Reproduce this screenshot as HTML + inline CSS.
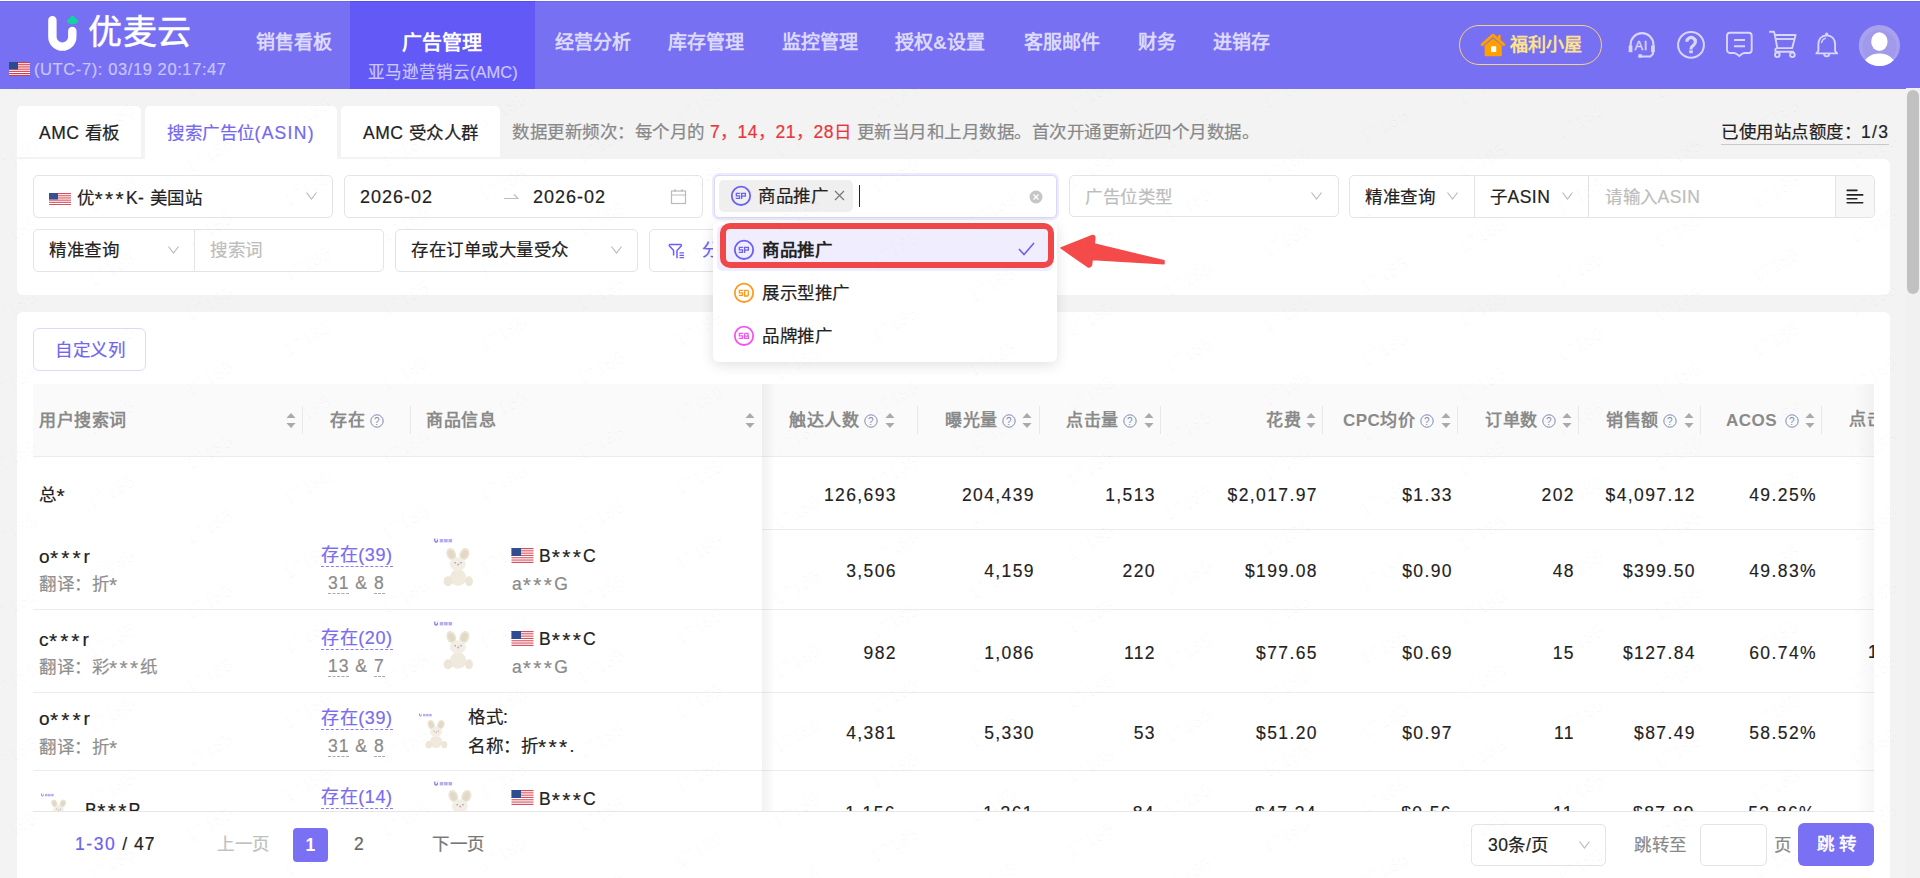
<!DOCTYPE html>
<html lang="zh-CN"><head><meta charset="utf-8">
<style>
*{box-sizing:border-box;margin:0;padding:0}
html,body{width:1920px;height:878px;overflow:hidden}
body{position:relative;background:#f3f3f3;font-family:"Liberation Sans",sans-serif;color:#222;font-size:17.5px;-webkit-text-stroke-width:.2px;text-spacing-trim:space-all;letter-spacing:.5px}
.a{position:absolute;white-space:nowrap}
#hdr{position:absolute;left:0;top:0;width:1920px;height:89px;background:#7770f3;border-top:1px solid #fff}
#hdr:before{content:"";position:absolute;left:0;top:0;z-index:0;width:100%;height:1px;background:#6b64ee}
.nav{position:absolute;top:29px;font-size:19px;letter-spacing:0;font-weight:bold;-webkit-text-stroke-width:0;color:#dcd9ff;line-height:26px}
.panel{position:absolute;background:#fff;border-radius:6px}
.box{position:absolute;border:1px solid #e3e3ea;border-radius:5px;background:#fff}
.chev{position:absolute;width:11px;height:8px}
.ph{color:#bdbdbd}
.th{position:absolute;top:408px;font-size:17px;font-weight:bold;-webkit-text-stroke-width:0;color:#8a8a8a;line-height:26px}
.q{position:absolute;top:414px;width:14px;height:14px}
.srt{position:absolute;top:413px;width:10px;height:15px}
.dv{position:absolute;top:406px;width:1px;height:28px;background:#e8e8e8}
.num{position:absolute;font-size:17.5px;letter-spacing:1.4px;color:#222;line-height:20px;text-align:right;-webkit-text-stroke:.15px #222;margin-top:1px}
.v{letter-spacing:1.3px}
.ast{font-size:21px;letter-spacing:2.3px;position:relative;top:2px}
.hl{position:absolute;height:1px;background:#ececec}
</style></head><body>
<!-- HEADER -->
<div id="hdr">
  <div class="a" style="left:350px;top:0;width:185px;height:88px;background:#6359f6"></div>
  <div class="a" style="left:350px;top:0;width:185px;height:1px;background:#5549f5"></div>
  <svg class="a" style="left:44px;top:12px" width="40" height="42" viewBox="0 0 40 42">
    <path d="M8.4 7.2 V23.7 a9.95 9.95 0 0 0 19.9 0 V17.9" fill="none" stroke="#fff" stroke-width="8.4" stroke-linecap="round"/>
    <ellipse cx="28.6" cy="8" rx="5.6" ry="3.3" fill="#13d3a0"/><circle cx="28.6" cy="5.6" r="2.6" fill="#13d3a0"/>
  </svg>
  <div class="a" style="left:88px;top:11px;font-size:34px;color:#fff;line-height:40px;-webkit-text-stroke:.5px #fff">优麦云</div>
  <svg class="a" style="left:9px;top:61px" width="21" height="14" viewBox="0 0 21 14">
    <rect width="21" height="14" fill="#fff"/>
    <g fill="#d23c4b"><rect y="0" width="21" height="1.2"/><rect y="2.2" width="21" height="1.1"/><rect y="4.4" width="21" height="1.1"/><rect y="6.6" width="21" height="1.1"/><rect y="8.8" width="21" height="1.1"/><rect y="11" width="21" height="1.1"/><rect y="12.9" width="21" height="1.1"/></g>
    <rect width="9" height="7.5" fill="#2c4a8c"/>
  </svg>
  <div class="a" style="left:34px;top:59px;font-size:16.5px;letter-spacing:.6px;color:#c9c5ff;line-height:20px;top:58px">(UTC-7): 03/19 20:17:47</div>
  <div class="nav" style="left:256px">销售看板</div>
  <div class="nav" style="left:402px;top:29px;font-size:20px;color:#fff">广告管理</div>
  <div class="a" style="left:368px;top:61px;font-size:16.5px;letter-spacing:0;color:#cbc7ff;line-height:20px">亚马逊营销云(AMC)</div>
  <div class="nav" style="left:555px">经营分析</div>
  <div class="nav" style="left:668px">库存管理</div>
  <div class="nav" style="left:782px">监控管理</div>
  <div class="nav" style="left:895px">授权&amp;设置</div>
  <div class="nav" style="left:1024px">客服邮件</div>
  <div class="nav" style="left:1138px">财务</div>
  <div class="nav" style="left:1213px">进销存</div>
  <!-- welfare pill -->
  <div class="a" style="left:1459px;top:24px;width:143px;height:40px;border:1.3px solid #f6d27c;border-radius:20px"></div>
  <svg class="a" style="left:1480px;top:32px" width="26" height="24" viewBox="0 0 26 24">
    <path d="M2.2 11.6 L13 2.2 L23.8 11.6" fill="none" stroke="#ffa000" stroke-width="3" stroke-linecap="round" stroke-linejoin="round"/>
    <rect x="18" y="2" width="2.6" height="5.5" fill="#ffa000"/>
    <path d="M4.6 12.6 L13 5.6 L21.8 12.6 V22 a1.2 1.2 0 0 1 -1.2 1.2 H5.8 a1.2 1.2 0 0 1 -1.2 -1.2Z" fill="#ffa000"/>
    <rect x="11" y="13.2" width="5.2" height="5.8" rx=".6" fill="#fff"/>
  </svg>
  <div class="a" style="left:1510px;top:31px;font-size:18px;font-weight:bold;-webkit-text-stroke-width:0;letter-spacing:0;color:#ffe38c;line-height:26px">福利小屋</div>
  <!-- icons -->
  <svg class="a" style="left:1626px;top:29px" width="32" height="30" viewBox="0 0 32 30">
    <path d="M4.6 16 V14.5 a11.4 11.4 0 0 1 22.8 0 V16" fill="none" stroke="#d9d6ff" stroke-width="2.1"/>
    <rect x="2.7" y="15.6" width="3.7" height="6.6" fill="#d9d6ff"/>
    <rect x="25.1" y="15.6" width="3.7" height="6.6" fill="#d9d6ff"/>
    <path d="M27 22 V23.8 L24.3 26.6 H12.6" fill="none" stroke="#d9d6ff" stroke-width="2"/>
    <rect x="12.4" y="24.2" width="3.4" height="3.4" fill="#d9d6ff"/>
    <text x="15.2" y="19.5" text-anchor="middle" font-family="Liberation Sans" font-size="13" fill="#d9d6ff" stroke="#d9d6ff" stroke-width=".4">AI</text>
  </svg>
  <svg class="a" style="left:1676px;top:29px" width="30" height="30" viewBox="0 0 30 30">
    <circle cx="15" cy="14.9" r="12.9" fill="none" stroke="#d9d6ff" stroke-width="2"/>
    <path d="M10.8 11.8 a4.3 4.3 0 1 1 6.6 3.6 c-1.6 1 -2.4 1.6 -2.4 3.4 v.6" fill="none" stroke="#d9d6ff" stroke-width="3.2"/>
    <rect x="13.2" y="20.4" width="3.6" height="2.8" fill="#d9d6ff"/>
  </svg>
  <svg class="a" style="left:1725px;top:30px" width="30" height="28" viewBox="0 0 30 28">
    <path d="M5 1.8 H23.7 a3 3 0 0 1 3 3 V19 a3 3 0 0 1 -3 3 H19.5 Q18 22 16.5 23.3 L14.3 25 L12 23.3 Q10.5 22 9 22 H5 a3 3 0 0 1 -3 -3 V4.8 a3 3 0 0 1 3 -3Z" fill="none" stroke="#d9d6ff" stroke-width="1.9"/>
    <path d="M9 9 H20 M9 15.3 H20" stroke="#d9d6ff" stroke-width="1.9"/>
  </svg>
  <svg class="a" style="left:1768px;top:29px" width="30" height="30" viewBox="0 0 30 30">
    <path d="M1.1 1.8 H6 L6.9 5" fill="none" stroke="#d9d6ff" stroke-width="1.9" stroke-linejoin="round"/>
    <path d="M6.9 5 H27.6 L24.2 18.1 H9.3 Z" fill="none" stroke="#d9d6ff" stroke-width="1.9" stroke-linejoin="round"/>
    <path d="M7.9 9 H26.6" stroke="#d9d6ff" stroke-width="1.9"/>
    <path d="M9.3 18.1 Q7.3 18.1 7.3 19.9 Q7.3 21.7 9.3 21.7 H26" fill="none" stroke="#d9d6ff" stroke-width="1.9"/>
    <circle cx="9.3" cy="24.8" r="2.3" fill="none" stroke="#d9d6ff" stroke-width="1.9"/>
    <circle cx="24.4" cy="24.8" r="2.3" fill="none" stroke="#d9d6ff" stroke-width="1.9"/>
  </svg>
  <svg class="a" style="left:1814px;top:29px" width="26" height="30" viewBox="0 0 26 30">
    <path d="M12.7 5.3 C7.2 5.6 4.4 9.5 4.4 14.5 V21 L2.4 23.4 H23.1 L21.1 21 V14.5 C21.1 9.5 18.2 5.6 12.7 5.3Z" fill="none" stroke="#d9d6ff" stroke-width="1.9" stroke-linejoin="round"/>
    <circle cx="12.7" cy="4" r="1.6" fill="#d9d6ff"/>
    <path d="M10.1 23.8 a2.6 2.6 0 0 0 5.2 0" fill="none" stroke="#d9d6ff" stroke-width="1.8"/>
    <path d="M7.4 13 Q8.2 9.2 11.8 7.9" fill="none" stroke="#d9d6ff" stroke-width="1.3"/>
  </svg>
  <svg class="a" style="left:1858px;top:22px" width="44" height="44" viewBox="0 0 44 44">
    <defs><clipPath id="avc"><circle cx="21.4" cy="22.5" r="20.6"/></clipPath></defs>
    <circle cx="21.4" cy="22.5" r="20.6" fill="#a7a1ee"/>
    <circle cx="21.4" cy="24" r="17" fill="#9c94e6" opacity=".6"/>
    <g clip-path="url(#avc)">
      <ellipse cx="21.4" cy="18.7" rx="8.2" ry="9.4" fill="#fff"/>
      <ellipse cx="21.4" cy="46.2" rx="17.5" ry="15.8" fill="#fff"/>
    </g>
  </svg>
</div>
<!-- TABS -->
<div class="panel" style="left:17px;top:106px;width:124px;height:51px;border-radius:5px 5px 0 0"></div>
<div class="panel" style="left:145px;top:106px;width:192px;height:60px;border-radius:5px 5px 0 0"></div>
<div class="panel" style="left:341px;top:106px;width:159px;height:51px;border-radius:5px 5px 0 0"></div>
<div class="a" style="left:39px;top:121px;font-size:17.5px;color:#222;line-height:24px">AMC 看板</div>
<div class="a" style="left:167px;top:121px;font-size:17.5px;color:#7468ef;line-height:24px">搜索广告位<span class="v">(ASIN)</span></div>
<div class="a" style="left:363px;top:121px;font-size:17.5px;color:#222;line-height:24px">AMC 受众人群</div>
<div class="a" style="left:512px;top:120px;font-size:17.5px;color:#888;line-height:24px">数据更新频次：每个月的 <span style="color:#e8363b">7，14，21，28日</span> 更新当月和上月数据。首次开通更新近四个月数据。</div>
<div class="a" style="left:1721px;top:120px;font-size:17.5px;color:#222;line-height:24px;height:25px;border-bottom:1px solid #c8c8c8">已使用站点额度：<span class="v">1/3</span></div>
<!-- FILTER PANEL -->
<div class="panel" style="left:17px;top:159px;width:1873px;height:136px;border-radius:0 6px 6px 6px"></div>
<!-- row1 -->
<div class="box" style="left:33px;top:175px;width:300px;height:43px"></div>
<svg class="a" style="left:49px;top:193px" width="22" height="12" viewBox="0 0 22 12">
  <rect width="22" height="12" fill="#fff"/>
  <g fill="#d8505c"><rect y="0" width="22" height="1"/><rect y="1.9" width="22" height="0.9"/><rect y="3.7" width="22" height="0.9"/><rect y="5.5" width="22" height="0.9"/><rect y="7.3" width="22" height="0.9"/><rect y="9.1" width="22" height="0.9"/><rect y="11" width="22" height="1"/></g>
  <rect width="9" height="6.5" fill="#3a4f8f"/>
</svg>
<div class="a" style="left:77px;top:185px;font-size:17.5px;line-height:24px">优<span class="ast">***</span>K- 美国站</div>
<svg class="chev" style="left:306px;top:192px" viewBox="0 0 11 8"><path d="M.5 .5 L5.5 7 L10.5 .5" fill="none" stroke="#bbb" stroke-width="1.2"/></svg>
<div class="box" style="left:344px;top:175px;width:359px;height:43px"></div>
<div class="a" style="left:360px;top:185px;font-size:18px;letter-spacing:1px;line-height:24px">2026-02</div>
<svg class="a" style="left:504px;top:193px" width="15" height="6" viewBox="0 0 15 6"><path d="M0 5.5 H14 L10 1.5" fill="none" stroke="#bbb" stroke-width="1.2"/></svg>
<div class="a" style="left:533px;top:185px;font-size:18px;letter-spacing:1px;line-height:24px">2026-02</div>
<svg class="a" style="left:670px;top:188px" width="17" height="17" viewBox="0 0 17 17"><rect x="1.5" y="3" width="14" height="12.5" fill="none" stroke="#bbb" stroke-width="1.2"/><path d="M1.5 7 H15.5 M5 1 V4 M12 1 V4" stroke="#bbb" stroke-width="1.2"/></svg>
<!-- tag select focused -->
<div class="a" style="left:712px;top:173px;width:347px;height:47px;border-radius:7px;background:#edeafd"></div>
<div class="box" style="left:714px;top:175px;width:343px;height:43px;border-color:#dcd8f8"></div>
<div class="a" style="left:719px;top:180px;width:134px;height:32px;background:#efefef;border-radius:5px"></div>
<svg class="a" style="left:730px;top:185px" width="22" height="22" viewBox="0 0 22 22"><circle cx="11" cy="10.8" r="9.2" fill="none" stroke="#6c5ff5" stroke-width="1.8"/><path d="M10.2 8.45 H6.35 V10.9 H9.55 V13.35 H5.7 M11.65 14 V8.45 H15.35 V11.2 H11.65" fill="none" stroke="#6c5ff5" stroke-width="1.3"/></svg>
<div class="a" style="left:758px;top:184px;font-size:17.5px;line-height:24px">商品推广</div>
<svg class="a" style="left:834px;top:190px" width="11" height="11" viewBox="0 0 11 11"><path d="M1 1 L10 10 M10 1 L1 10" stroke="#777" stroke-width="1.2"/></svg>
<div class="a" style="left:859px;top:185px;width:1px;height:22px;background:#222"></div>
<svg class="a" style="left:1029px;top:190px" width="14" height="14" viewBox="0 0 14 14"><circle cx="7" cy="7" r="6.5" fill="#c6c6c6"/><path d="M4.5 4.5 L9.5 9.5 M9.5 4.5 L4.5 9.5" stroke="#fff" stroke-width="1.3"/></svg>
<div class="box" style="left:1069px;top:175px;width:270px;height:42px"></div>
<div class="a ph" style="left:1085px;top:185px;font-size:17.5px;line-height:24px">广告位类型</div>
<svg class="chev" style="left:1311px;top:192px" viewBox="0 0 11 8"><path d="M.5 .5 L5.5 7 L10.5 .5" fill="none" stroke="#bbb" stroke-width="1.2"/></svg>
<div class="box" style="left:1349px;top:175px;width:526px;height:43px"></div>
<div class="a" style="left:1474px;top:176px;width:1px;height:42px;background:#e3e3ea"></div>
<div class="a" style="left:1588px;top:176px;width:1px;height:42px;background:#e3e3ea"></div>
<div class="a" style="left:1835px;top:176px;width:39px;height:41px;background:#f7f7f7;border-left:1px solid #e3e3ea;border-radius:0 5px 5px 0"></div>
<div class="a" style="left:1365px;top:185px;font-size:17.5px;line-height:24px">精准查询</div>
<svg class="chev" style="left:1447px;top:192px" viewBox="0 0 11 8"><path d="M.5 .5 L5.5 7 L10.5 .5" fill="none" stroke="#bbb" stroke-width="1.2"/></svg>
<div class="a" style="left:1490px;top:185px;font-size:17.5px;line-height:24px">子ASIN</div>
<svg class="chev" style="left:1562px;top:192px" viewBox="0 0 11 8"><path d="M.5 .5 L5.5 7 L10.5 .5" fill="none" stroke="#bbb" stroke-width="1.2"/></svg>
<div class="a ph" style="left:1605px;top:185px;font-size:17.5px;line-height:24px">请输入ASIN</div>
<svg class="a" style="left:1846px;top:188px" width="18" height="17" viewBox="0 0 18 17"><path d="M1.2 2.4 H10.9 M1.2 6.9 H16.7 M1.2 10.8 H10.9 M1.2 14.8 H16.7" stroke="#222" stroke-width="1.6" stroke-linecap="round"/></svg>
<!-- row2 -->
<div class="box" style="left:33px;top:229px;width:351px;height:43px"></div>
<div class="a" style="left:194px;top:230px;width:1px;height:41px;background:#e3e3ea"></div>
<div class="a" style="left:49px;top:238px;font-size:17.5px;line-height:24px">精准查询</div>
<svg class="chev" style="left:168px;top:246px" viewBox="0 0 11 8"><path d="M.5 .5 L5.5 7 L10.5 .5" fill="none" stroke="#bbb" stroke-width="1.2"/></svg>
<div class="a ph" style="left:210px;top:238px;font-size:17.5px;line-height:24px">搜索词</div>
<div class="box" style="left:395px;top:229px;width:243px;height:43px"></div>
<div class="a" style="left:411px;top:238px;font-size:17.5px;line-height:24px">存在订单或大量受众</div>
<svg class="chev" style="left:611px;top:246px" viewBox="0 0 11 8"><path d="M.5 .5 L5.5 7 L10.5 .5" fill="none" stroke="#bbb" stroke-width="1.2"/></svg>
<div class="box" style="left:649px;top:229px;width:120px;height:43px"></div>
<svg class="a" style="left:668px;top:243px" width="18" height="17" viewBox="0 0 18 17"><path d="M5.6 12.6 V7.5 L1.5 3 Q.8 1.7 2.2 1.6 H12.5 Q13.9 1.7 13.2 3 L9 7.5 V15.2" fill="none" stroke="#6c5ff5" stroke-width="1.5" stroke-linejoin="round"/><path d="M11.5 9.9 H16 M11.5 12.3 H16 M11.5 14.7 H16" stroke="#6c5ff5" stroke-width="1.2"/></svg>
<div class="a" style="left:702px;top:238px;font-size:17.5px;line-height:24px;color:#6c5ff5">分</div>
<!-- TABLE PANEL -->
<div class="panel" style="left:17px;top:312px;width:1873px;height:600px"></div>
<div class="a" style="left:33px;top:328px;width:113px;height:43px;border:1px solid #dedaf3;border-radius:6px;background:#fff"></div>
<div class="a" style="left:55px;top:338px;font-size:17.5px;color:#7265f0;line-height:24px">自定义列</div>
<!-- table header -->
<div class="a" style="left:33px;top:384px;width:1841px;height:72px;background:#fafafa"></div>
<div class="hl" style="left:33px;top:456px;width:1841px"></div>
<div class="th" style="left:39px">用户搜索词</div>
<svg class="srt" style="left:286px" viewBox="0 0 10 15"><path d="M5 0 L9.6 5 H.4Z M5 15 L9.6 10 H.4Z" fill="#aaa"/></svg>
<div class="dv" style="left:302px"></div>
<div class="th" style="left:330px">存在</div>
<svg class="q" style="left:370px" viewBox="0 0 14 14"><circle cx="7" cy="7" r="6.2" fill="none" stroke="#7d89b3" stroke-width="1"/><text x="7" y="10.5" text-anchor="middle" font-family="Liberation Sans" font-size="10" fill="#7d89b3">?</text></svg>
<div class="dv" style="left:410px"></div>
<div class="th" style="left:426px">商品信息</div>
<svg class="srt" style="left:745px" viewBox="0 0 10 15"><path d="M5 0 L9.6 5 H.4Z M5 15 L9.6 10 H.4Z" fill="#aaa"/></svg>
<!-- scroll section headers -->
<div class="th" style="left:789px">触达人数</div>
<svg class="q" style="left:864px" viewBox="0 0 14 14"><circle cx="7" cy="7" r="6.2" fill="none" stroke="#7d89b3" stroke-width="1"/><text x="7" y="10.5" text-anchor="middle" font-family="Liberation Sans" font-size="10" fill="#7d89b3">?</text></svg>
<svg class="srt" style="left:885px" viewBox="0 0 10 15"><path d="M5 0 L9.6 5 H.4Z M5 15 L9.6 10 H.4Z" fill="#aaa"/></svg>
<div class="dv" style="left:917px"></div>
<div class="th" style="left:945px">曝光量</div>
<svg class="q" style="left:1002px" viewBox="0 0 14 14"><circle cx="7" cy="7" r="6.2" fill="none" stroke="#7d89b3" stroke-width="1"/><text x="7" y="10.5" text-anchor="middle" font-family="Liberation Sans" font-size="10" fill="#7d89b3">?</text></svg>
<svg class="srt" style="left:1022px" viewBox="0 0 10 15"><path d="M5 0 L9.6 5 H.4Z M5 15 L9.6 10 H.4Z" fill="#aaa"/></svg>
<div class="dv" style="left:1039px"></div>
<div class="th" style="left:1066px">点击量</div>
<svg class="q" style="left:1123px" viewBox="0 0 14 14"><circle cx="7" cy="7" r="6.2" fill="none" stroke="#7d89b3" stroke-width="1"/><text x="7" y="10.5" text-anchor="middle" font-family="Liberation Sans" font-size="10" fill="#7d89b3">?</text></svg>
<svg class="srt" style="left:1144px" viewBox="0 0 10 15"><path d="M5 0 L9.6 5 H.4Z M5 15 L9.6 10 H.4Z" fill="#aaa"/></svg>
<div class="dv" style="left:1160px"></div>
<div class="th" style="left:1266px">花费</div>
<svg class="srt" style="left:1306px" viewBox="0 0 10 15"><path d="M5 0 L9.6 5 H.4Z M5 15 L9.6 10 H.4Z" fill="#aaa"/></svg>
<div class="dv" style="left:1322px"></div>
<div class="th" style="left:1343px">CPC均价</div>
<svg class="q" style="left:1420px" viewBox="0 0 14 14"><circle cx="7" cy="7" r="6.2" fill="none" stroke="#7d89b3" stroke-width="1"/><text x="7" y="10.5" text-anchor="middle" font-family="Liberation Sans" font-size="10" fill="#7d89b3">?</text></svg>
<svg class="srt" style="left:1441px" viewBox="0 0 10 15"><path d="M5 0 L9.6 5 H.4Z M5 15 L9.6 10 H.4Z" fill="#aaa"/></svg>
<div class="dv" style="left:1457px"></div>
<div class="th" style="left:1485px">订单数</div>
<svg class="q" style="left:1542px" viewBox="0 0 14 14"><circle cx="7" cy="7" r="6.2" fill="none" stroke="#7d89b3" stroke-width="1"/><text x="7" y="10.5" text-anchor="middle" font-family="Liberation Sans" font-size="10" fill="#7d89b3">?</text></svg>
<svg class="srt" style="left:1562px" viewBox="0 0 10 15"><path d="M5 0 L9.6 5 H.4Z M5 15 L9.6 10 H.4Z" fill="#aaa"/></svg>
<div class="dv" style="left:1578px"></div>
<div class="th" style="left:1606px">销售额</div>
<svg class="q" style="left:1663px" viewBox="0 0 14 14"><circle cx="7" cy="7" r="6.2" fill="none" stroke="#7d89b3" stroke-width="1"/><text x="7" y="10.5" text-anchor="middle" font-family="Liberation Sans" font-size="10" fill="#7d89b3">?</text></svg>
<svg class="srt" style="left:1684px" viewBox="0 0 10 15"><path d="M5 0 L9.6 5 H.4Z M5 15 L9.6 10 H.4Z" fill="#aaa"/></svg>
<div class="dv" style="left:1700px"></div>
<div class="th" style="left:1726px">ACOS</div>
<svg class="q" style="left:1785px" viewBox="0 0 14 14"><circle cx="7" cy="7" r="6.2" fill="none" stroke="#7d89b3" stroke-width="1"/><text x="7" y="10.5" text-anchor="middle" font-family="Liberation Sans" font-size="10" fill="#7d89b3">?</text></svg>
<svg class="srt" style="left:1805px" viewBox="0 0 10 15"><path d="M5 0 L9.6 5 H.4Z M5 15 L9.6 10 H.4Z" fill="#aaa"/></svg>
<div class="dv" style="left:1821px"></div>
<div class="a" style="left:1849px;top:384px;width:25px;height:72px;overflow:hidden"><div class="th" style="left:0;top:23px">点击</div></div>
<!-- ROWS -->
<div class="hl" style="left:762px;top:529px;width:1112px"></div>
<div class="hl" style="left:33px;top:609px;width:1841px"></div>
<div class="hl" style="left:33px;top:692px;width:1841px"></div>
<div class="hl" style="left:33px;top:770px;width:1841px"></div>
<div class="a" style="left:33px;top:811px;width:1841px;height:1px;background:#e6e6e6"></div>
<div class="a" style="left:762px;top:384px;width:14px;height:427px;background:linear-gradient(to right,rgba(0,0,0,.05),rgba(0,0,0,0))"></div>
<div class="a" style="left:1856px;top:384px;width:18px;height:427px;background:linear-gradient(to right,rgba(0,0,0,0),rgba(0,0,0,.035))"></div>
<!-- summary -->
<div class="a" style="left:39px;top:482px;font-size:17.5px;line-height:24px">总<span class="ast">*</span></div>
<div class="num" style="right:1023px;top:484px">126,693</div>
<div class="num" style="right:885px;top:484px">204,439</div>
<div class="num" style="right:764px;top:484px">1,513</div>
<div class="num" style="right:602px;top:484px">$2,017.97</div>
<div class="num" style="right:467px;top:484px">$1.33</div>
<div class="num" style="right:345px;top:484px">202</div>
<div class="num" style="right:224px;top:484px">$4,097.12</div>
<div class="num" style="right:103px;top:484px">49.25%</div>
<!-- row1 -->
<div class="a" style="left:39px;top:544px;font-size:17.5px;line-height:24px;letter-spacing:.5px"><span style="font-size:19px">o</span><span class="ast" style="letter-spacing:3px">***</span><span style="font-size:19px">r</span></div>
<div class="a" style="left:39px;top:571px;font-size:17.5px;line-height:24px;color:#8f8f8f">翻译：折<span class="ast">*</span></div>
<div class="num" style="right:1023px;top:560px">3,506</div>
<div class="num" style="right:885px;top:560px">4,159</div>
<div class="num" style="right:764px;top:560px">220</div>
<div class="num" style="right:602px;top:560px">$199.08</div>
<div class="num" style="right:467px;top:560px">$0.90</div>
<div class="num" style="right:345px;top:560px">48</div>
<div class="num" style="right:224px;top:560px">$399.50</div>
<div class="num" style="right:103px;top:560px">49.83%</div>
<!-- row2 -->
<div class="a" style="left:39px;top:627px;font-size:17.5px;line-height:24px;letter-spacing:.5px"><span style="font-size:19px">c</span><span class="ast" style="letter-spacing:3px">***</span><span style="font-size:19px">r</span></div>
<div class="a" style="left:39px;top:654px;font-size:17.5px;line-height:24px;color:#8f8f8f">翻译：彩<span class="ast">***</span>纸</div>
<div class="num" style="right:1023px;top:642px">982</div>
<div class="num" style="right:885px;top:642px">1,086</div>
<div class="num" style="right:764px;top:642px">112</div>
<div class="num" style="right:602px;top:642px">$77.65</div>
<div class="num" style="right:467px;top:642px">$0.69</div>
<div class="num" style="right:345px;top:642px">15</div>
<div class="num" style="right:224px;top:642px">$127.84</div>
<div class="num" style="right:103px;top:642px">60.74%</div>
<div class="a" style="left:1868px;top:642px;width:6px;overflow:hidden;font-size:17.5px;line-height:20px">1</div>
<!-- row3 -->
<div class="a" style="left:39px;top:706px;font-size:17.5px;line-height:24px;letter-spacing:.5px"><span style="font-size:19px">o</span><span class="ast" style="letter-spacing:3px">***</span><span style="font-size:19px">r</span></div>
<div class="a" style="left:39px;top:734px;font-size:17.5px;line-height:24px;color:#8f8f8f">翻译：折<span class="ast">*</span></div>
<div class="num" style="right:1023px;top:722px">4,381</div>
<div class="num" style="right:885px;top:722px">5,330</div>
<div class="num" style="right:764px;top:722px">53</div>
<div class="num" style="right:602px;top:722px">$51.20</div>
<div class="num" style="right:467px;top:722px">$0.97</div>
<div class="num" style="right:345px;top:722px">11</div>
<div class="num" style="right:224px;top:722px">$87.49</div>
<div class="num" style="right:103px;top:722px">58.52%</div>
<!-- row4 clipped -->
<div class="a" style="left:0;top:771px;width:1874px;height:40px;overflow:hidden">
  <div class="num" style="right:978px;top:31px">1,156</div>
  <div class="num" style="right:840px;top:31px">1,361</div>
  <div class="num" style="right:719px;top:31px">84</div>
  <div class="num" style="right:557px;top:31px">$47.34</div>
  <div class="num" style="right:422px;top:31px">$0.56</div>
  <div class="num" style="right:300px;top:31px">11</div>
  <div class="num" style="right:179px;top:31px">$87.89</div>
  <div class="num" style="right:58px;top:31px">53.86%</div>
  <div class="a" style="left:85px;top:26px;font-size:17.5px;line-height:24px;letter-spacing:.5px">B<span class="ast">***</span>P</div>
</div>
<svg width="0" height="0" style="position:absolute">
  <defs>
    <symbol id="bun" viewBox="0 0 31 39">
      <ellipse cx="8.3" cy="6.2" rx="4.6" ry="6.3" transform="rotate(-22 8.3 6.2)" fill="#ebe3d3"/>
      <ellipse cx="21.4" cy="6.2" rx="4.8" ry="6.3" transform="rotate(22 21.4 6.2)" fill="#ebe3d3"/>
      <ellipse cx="8.5" cy="6.6" rx="2.8" ry="4.6" transform="rotate(-22 8.5 6.6)" fill="#e2d8c5"/>
      <ellipse cx="21.2" cy="6.6" rx="2.9" ry="4.6" transform="rotate(22 21.2 6.6)" fill="#e2d8c5"/>
      <ellipse cx="15" cy="29.5" rx="8.2" ry="8.3" fill="#efe9de"/>
      <ellipse cx="14.8" cy="16" rx="8" ry="6.8" fill="#f3eee5"/>
      <ellipse cx="5" cy="33.2" rx="4.4" ry="5" fill="#ece5d8"/>
      <ellipse cx="26" cy="33.2" rx="3.9" ry="5" fill="#ece5d8"/>
      <circle cx="12.2" cy="14.8" r=".8" fill="#8d9aa8"/><circle cx="18" cy="14.8" r=".8" fill="#8d9aa8"/>
      <circle cx="15.2" cy="16.6" r="1" fill="#e79aa2"/>
    </symbol>
    <symbol id="flag" viewBox="0 0 22 15">
      <rect width="22" height="15" fill="#fff"/>
      <g fill="#d8505c"><rect y="0" width="22" height="1.2"/><rect y="2.3" width="22" height="1.1"/><rect y="4.6" width="22" height="1.1"/><rect y="6.9" width="22" height="1.1"/><rect y="9.2" width="22" height="1.1"/><rect y="11.5" width="22" height="1.1"/><rect y="13.8" width="22" height="1.2"/></g>
      <rect width="9.5" height="8" fill="#2f4d8f"/>
    </symbol>
    <symbol id="lg" viewBox="0 0 20 5">
      <path d="M.8 .4 V2.8 a1.3 1.3 0 0 0 2.6 0 V2" fill="none" stroke="#7465f2" stroke-width="1.1"/>
      <circle cx="3.4" cy="1" r=".6" fill="#2dcf9a"/>
      <rect x="5.7" y="1" width="3.6" height="3.4" fill="#b3abf6"/><rect x="10.1" y="1" width="3.6" height="3.4" fill="#b3abf6"/><rect x="14.5" y="1" width="3.6" height="3.4" fill="#b3abf6"/>
    </symbol>
  </defs>
</svg>
<style>
.lnk{position:absolute;left:321px;font-size:18px;letter-spacing:.6px;color:#7a6cf0;line-height:22px;border-bottom:1.5px dashed #8a7ef2;padding-bottom:0}
.cnt{position:absolute;left:328px;font-size:17.5px;color:#8a8a8a;line-height:22px;letter-spacing:1px}
.cnt u{text-decoration:none;border-bottom:1px dashed #aaa}
.bn{position:absolute;width:31px;height:39px}
.lgo{position:absolute;width:20px;height:5px}
.fl{position:absolute;width:23px;height:15px}
.asin{position:absolute;left:539px;font-size:17.5px;line-height:22px;letter-spacing:1px}
.sku{position:absolute;left:512px;font-size:17.5px;line-height:22px;letter-spacing:1px;color:#8a8a8a}
</style>
<!-- row1 product -->
<div class="lnk" style="top:544px">存在(39)</div>
<div class="cnt" style="top:572px"><u>31</u> &amp; <u>8</u></div>
<svg class="lgo" style="left:434px;top:538px"><use href="#lg"/></svg>
<svg class="bn" style="left:443px;top:548px"><use href="#bun"/></svg>
<svg class="fl" style="left:511px;top:548px"><use href="#flag"/></svg>
<div class="asin" style="top:544px">B<span class="ast">***</span>C</div>
<div class="sku" style="top:572px">a<span class="ast">***</span>G</div>
<!-- row2 product -->
<div class="lnk" style="top:627px">存在(20)</div>
<div class="cnt" style="top:655px"><u>13</u> &amp; <u>7</u></div>
<svg class="lgo" style="left:434px;top:621px"><use href="#lg"/></svg>
<svg class="bn" style="left:443px;top:631px"><use href="#bun"/></svg>
<svg class="fl" style="left:511px;top:631px"><use href="#flag"/></svg>
<div class="asin" style="top:627px">B<span class="ast">***</span>C</div>
<div class="sku" style="top:655px">a<span class="ast">***</span>G</div>
<!-- row3 product -->
<div class="lnk" style="top:707px">存在(39)</div>
<div class="cnt" style="top:735px"><u>31</u> &amp; <u>8</u></div>
<svg class="lgo" style="left:419px;top:713px;width:14px;height:4px"><use href="#lg"/></svg>
<svg class="bn" style="left:425px;top:720px;width:23px;height:29px"><use href="#bun"/></svg>
<div class="a" style="left:468px;top:705px;font-size:17.5px;line-height:24px">格式:</div>
<div class="a" style="left:468px;top:733px;font-size:17.5px;line-height:24px;letter-spacing:.5px">名称：折<span class="ast">***</span>.</div>
<!-- row4 product clipped -->
<div class="a" style="left:0;top:771px;width:1874px;height:40px;overflow:hidden">
  <div class="lnk" style="top:15px">存在(14)</div>
  <svg class="lgo" style="left:434px;top:10px"><use href="#lg"/></svg>
  <svg class="bn" style="left:445px;top:19px"><use href="#bun"/></svg>
  <svg class="fl" style="left:511px;top:19px"><use href="#flag"/></svg>
  <div class="asin" style="top:16px">B<span class="ast">***</span>C</div>
  <svg class="lgo" style="left:41px;top:22px;width:14px;height:4px"><use href="#lg"/></svg>
  <svg class="bn" style="left:49px;top:28px;width:20px;height:26px"><use href="#bun"/></svg>
</div>
<!-- PAGINATION -->
<div class="a" style="left:75px;top:832px;font-size:17.5px;line-height:24px;letter-spacing:1px"><span style="color:#6d5fef;letter-spacing:1.6px">1-30</span> / 47</div>
<div class="a" style="left:217px;top:832px;font-size:17.5px;line-height:24px;color:#c0c0c0">上一页</div>
<div class="a" style="left:293px;top:828px;width:35px;height:34px;background:#7a70f3;border-radius:4px;color:#fff;font-weight:bold;-webkit-text-stroke-width:0;font-size:17.5px;line-height:34px;text-align:center">1</div>
<div class="a" style="left:354px;top:832px;font-size:17.5px;line-height:24px;color:#666">2</div>
<div class="a" style="left:432px;top:832px;font-size:17.5px;line-height:24px;color:#777">下一页</div>
<div class="box" style="left:1471px;top:824px;width:135px;height:42px"></div>
<div class="a" style="left:1488px;top:833px;font-size:17.5px;line-height:24px">30条/页</div>
<svg class="chev" style="left:1579px;top:841px" viewBox="0 0 11 8"><path d="M.5 .5 L5.5 7 L10.5 .5" fill="none" stroke="#bbb" stroke-width="1.2"/></svg>
<div class="a" style="left:1634px;top:833px;font-size:17.5px;line-height:24px;color:#888">跳转至</div>
<div class="box" style="left:1700px;top:824px;width:67px;height:42px"></div>
<div class="a" style="left:1774px;top:833px;font-size:17.5px;line-height:24px;color:#888">页</div>
<div class="a" style="left:1798px;top:823px;width:76px;height:43px;background:#7a70f3;border-radius:6px;color:#fff;-webkit-text-stroke-width:.5px;font-size:17.5px;line-height:43px;text-align:center;letter-spacing:5px;padding-left:5px">跳转</div>
<!-- DROPDOWN -->
<div class="a" style="left:713px;top:222px;width:344px;height:140px;background:#fff;border-radius:6px;box-shadow:0 3px 14px rgba(0,0,0,.12)"></div>
<div class="a" style="left:717px;top:225px;width:336px;height:46px;background:#f0eefe;border-radius:6px"></div>
<div class="a" style="left:720px;top:223px;width:334px;height:45px;border:6px solid #f04848;border-radius:10px"></div>
<svg class="a" style="left:733px;top:239px" width="22" height="22" viewBox="0 0 22 22"><circle cx="11" cy="10.8" r="9.2" fill="none" stroke="#6c5ff5" stroke-width="1.8"/><path d="M10.2 8.45 H6.35 V10.9 H9.55 V13.35 H5.7 M11.65 14 V8.45 H15.35 V11.2 H11.65" fill="none" stroke="#6c5ff5" stroke-width="1.3"/></svg>
<div class="a" style="left:762px;top:238px;font-size:17.5px;font-weight:bold;-webkit-text-stroke-width:0;line-height:24px">商品推广</div>
<svg class="a" style="left:1018px;top:242px" width="17" height="14" viewBox="0 0 17 14"><path d="M1 7 L6 12.5 L16 1" fill="none" stroke="#6c5ff5" stroke-width="1.6"/></svg>
<svg class="a" style="left:733px;top:282px" width="22" height="22" viewBox="0 0 22 22"><circle cx="11" cy="10.8" r="9.2" fill="none" stroke="#ff9a1c" stroke-width="1.8"/><path d="M10.2 8.45 H6.35 V10.9 H9.55 V13.35 H5.7 M11.65 8.45 H14.4 Q15.35 8.45 15.35 9.4 V13.05 Q15.35 14 14.4 14 H11.65Z" fill="none" stroke="#ff9a1c" stroke-width="1.3"/></svg>
<div class="a" style="left:762px;top:281px;font-size:17.5px;line-height:24px">展示型推广</div>
<svg class="a" style="left:733px;top:325px" width="22" height="22" viewBox="0 0 22 22"><circle cx="11" cy="10.8" r="9.2" fill="none" stroke="#f553f0" stroke-width="1.8"/><path d="M10.2 8.45 H6.35 V10.9 H9.55 V13.35 H5.7 M11.65 8.45 H15 V11.2 H11.65 M11.65 11.2 H15.35 V13.35 H11.65 V8.45" fill="none" stroke="#f553f0" stroke-width="1.3"/></svg>
<div class="a" style="left:762px;top:324px;font-size:17.5px;line-height:24px">品牌推广</div>
<!-- ARROW -->
<svg class="a" style="left:1050px;top:225px" width="130" height="50" viewBox="1050 225 130 50">
  <path d="M1061 248 L1092.5 235.5 Q1095 235.5 1094.8 238 L1094.3 244 L1164 260.8 L1164 263.8 L1092.2 259.4 L1091.5 265 Q1090 268 1087.5 266.5 Z" fill="#f44a4a" stroke="#f44a4a" stroke-width="1.5" stroke-linejoin="round"/>
</svg>
<svg class="a" style="left:0;top:88px;pointer-events:none" width="1906" height="790" viewBox="0 88 1906 790"><g font-family="Liberation Sans" font-size="18" fill="#000" fill-opacity=".028" text-anchor="middle" dominant-baseline="central"><text transform="translate(13.5 11.2) rotate(-30)">17185</text><text transform="translate(13.5 85.6) rotate(-30)">17185</text><text transform="translate(13.5 160.0) rotate(-30)">17185</text><text transform="translate(13.5 234.4) rotate(-30)">17185</text><text transform="translate(13.5 308.8) rotate(-30)">17185</text><text transform="translate(13.5 383.2) rotate(-30)">17185</text><text transform="translate(13.5 457.6) rotate(-30)">17185</text><text transform="translate(13.5 532.0) rotate(-30)">17185</text><text transform="translate(13.5 606.4) rotate(-30)">17185</text><text transform="translate(13.5 680.8) rotate(-30)">17185</text><text transform="translate(13.5 755.2) rotate(-30)">17185</text><text transform="translate(13.5 829.6) rotate(-30)">17185</text><text transform="translate(13.5 904.0) rotate(-30)">17185</text><text transform="translate(111.4 -28.4) rotate(-30)">17185</text><text transform="translate(111.4 46.0) rotate(-30)">17185</text><text transform="translate(111.4 120.4) rotate(-30)">17185</text><text transform="translate(111.4 194.8) rotate(-30)">17185</text><text transform="translate(111.4 269.2) rotate(-30)">17185</text><text transform="translate(111.4 343.6) rotate(-30)">17185</text><text transform="translate(111.4 418.0) rotate(-30)">17185</text><text transform="translate(111.4 492.4) rotate(-30)">17185</text><text transform="translate(111.4 566.8) rotate(-30)">17185</text><text transform="translate(111.4 641.2) rotate(-30)">17185</text><text transform="translate(111.4 715.6) rotate(-30)">17185</text><text transform="translate(111.4 790.0) rotate(-30)">17185</text><text transform="translate(111.4 864.4) rotate(-30)">17185</text><text transform="translate(209.3 6.4) rotate(-30)">17185</text><text transform="translate(209.3 80.8) rotate(-30)">17185</text><text transform="translate(209.3 155.2) rotate(-30)">17185</text><text transform="translate(209.3 229.6) rotate(-30)">17185</text><text transform="translate(209.3 304.0) rotate(-30)">17185</text><text transform="translate(209.3 378.4) rotate(-30)">17185</text><text transform="translate(209.3 452.8) rotate(-30)">17185</text><text transform="translate(209.3 527.2) rotate(-30)">17185</text><text transform="translate(209.3 601.6) rotate(-30)">17185</text><text transform="translate(209.3 676.0) rotate(-30)">17185</text><text transform="translate(209.3 750.4) rotate(-30)">17185</text><text transform="translate(209.3 824.8) rotate(-30)">17185</text><text transform="translate(209.3 899.2) rotate(-30)">17185</text><text transform="translate(307.2 -33.2) rotate(-30)">17185</text><text transform="translate(307.2 41.2) rotate(-30)">17185</text><text transform="translate(307.2 115.6) rotate(-30)">17185</text><text transform="translate(307.2 190.0) rotate(-30)">17185</text><text transform="translate(307.2 264.4) rotate(-30)">17185</text><text transform="translate(307.2 338.8) rotate(-30)">17185</text><text transform="translate(307.2 413.2) rotate(-30)">17185</text><text transform="translate(307.2 487.6) rotate(-30)">17185</text><text transform="translate(307.2 562.0) rotate(-30)">17185</text><text transform="translate(307.2 636.4) rotate(-30)">17185</text><text transform="translate(307.2 710.8) rotate(-30)">17185</text><text transform="translate(307.2 785.2) rotate(-30)">17185</text><text transform="translate(307.2 859.6) rotate(-30)">17185</text><text transform="translate(405.1 1.6) rotate(-30)">17185</text><text transform="translate(405.1 76.0) rotate(-30)">17185</text><text transform="translate(405.1 150.4) rotate(-30)">17185</text><text transform="translate(405.1 224.8) rotate(-30)">17185</text><text transform="translate(405.1 299.2) rotate(-30)">17185</text><text transform="translate(405.1 373.6) rotate(-30)">17185</text><text transform="translate(405.1 448.0) rotate(-30)">17185</text><text transform="translate(405.1 522.4) rotate(-30)">17185</text><text transform="translate(405.1 596.8) rotate(-30)">17185</text><text transform="translate(405.1 671.2) rotate(-30)">17185</text><text transform="translate(405.1 745.6) rotate(-30)">17185</text><text transform="translate(405.1 820.0) rotate(-30)">17185</text><text transform="translate(405.1 894.4) rotate(-30)">17185</text><text transform="translate(503.0 -38.0) rotate(-30)">17185</text><text transform="translate(503.0 36.4) rotate(-30)">17185</text><text transform="translate(503.0 110.8) rotate(-30)">17185</text><text transform="translate(503.0 185.2) rotate(-30)">17185</text><text transform="translate(503.0 259.6) rotate(-30)">17185</text><text transform="translate(503.0 334.0) rotate(-30)">17185</text><text transform="translate(503.0 408.4) rotate(-30)">17185</text><text transform="translate(503.0 482.8) rotate(-30)">17185</text><text transform="translate(503.0 557.2) rotate(-30)">17185</text><text transform="translate(503.0 631.6) rotate(-30)">17185</text><text transform="translate(503.0 706.0) rotate(-30)">17185</text><text transform="translate(503.0 780.4) rotate(-30)">17185</text><text transform="translate(503.0 854.8) rotate(-30)">17185</text><text transform="translate(503.0 929.2) rotate(-30)">17185</text><text transform="translate(600.9 -3.2) rotate(-30)">17185</text><text transform="translate(600.9 71.2) rotate(-30)">17185</text><text transform="translate(600.9 145.6) rotate(-30)">17185</text><text transform="translate(600.9 220.0) rotate(-30)">17185</text><text transform="translate(600.9 294.4) rotate(-30)">17185</text><text transform="translate(600.9 368.8) rotate(-30)">17185</text><text transform="translate(600.9 443.2) rotate(-30)">17185</text><text transform="translate(600.9 517.6) rotate(-30)">17185</text><text transform="translate(600.9 592.0) rotate(-30)">17185</text><text transform="translate(600.9 666.4) rotate(-30)">17185</text><text transform="translate(600.9 740.8) rotate(-30)">17185</text><text transform="translate(600.9 815.2) rotate(-30)">17185</text><text transform="translate(600.9 889.6) rotate(-30)">17185</text><text transform="translate(698.8 31.6) rotate(-30)">17185</text><text transform="translate(698.8 106.0) rotate(-30)">17185</text><text transform="translate(698.8 180.4) rotate(-30)">17185</text><text transform="translate(698.8 254.8) rotate(-30)">17185</text><text transform="translate(698.8 329.2) rotate(-30)">17185</text><text transform="translate(698.8 403.6) rotate(-30)">17185</text><text transform="translate(698.8 478.0) rotate(-30)">17185</text><text transform="translate(698.8 552.4) rotate(-30)">17185</text><text transform="translate(698.8 626.8) rotate(-30)">17185</text><text transform="translate(698.8 701.2) rotate(-30)">17185</text><text transform="translate(698.8 775.6) rotate(-30)">17185</text><text transform="translate(698.8 850.0) rotate(-30)">17185</text><text transform="translate(698.8 924.4) rotate(-30)">17185</text><text transform="translate(796.7 -8.0) rotate(-30)">17185</text><text transform="translate(796.7 66.4) rotate(-30)">17185</text><text transform="translate(796.7 140.8) rotate(-30)">17185</text><text transform="translate(796.7 215.2) rotate(-30)">17185</text><text transform="translate(796.7 289.6) rotate(-30)">17185</text><text transform="translate(796.7 364.0) rotate(-30)">17185</text><text transform="translate(796.7 438.4) rotate(-30)">17185</text><text transform="translate(796.7 512.8) rotate(-30)">17185</text><text transform="translate(796.7 587.2) rotate(-30)">17185</text><text transform="translate(796.7 661.6) rotate(-30)">17185</text><text transform="translate(796.7 736.0) rotate(-30)">17185</text><text transform="translate(796.7 810.4) rotate(-30)">17185</text><text transform="translate(796.7 884.8) rotate(-30)">17185</text><text transform="translate(894.6 26.8) rotate(-30)">17185</text><text transform="translate(894.6 101.2) rotate(-30)">17185</text><text transform="translate(894.6 175.6) rotate(-30)">17185</text><text transform="translate(894.6 250.0) rotate(-30)">17185</text><text transform="translate(894.6 324.4) rotate(-30)">17185</text><text transform="translate(894.6 398.8) rotate(-30)">17185</text><text transform="translate(894.6 473.2) rotate(-30)">17185</text><text transform="translate(894.6 547.6) rotate(-30)">17185</text><text transform="translate(894.6 622.0) rotate(-30)">17185</text><text transform="translate(894.6 696.4) rotate(-30)">17185</text><text transform="translate(894.6 770.8) rotate(-30)">17185</text><text transform="translate(894.6 845.2) rotate(-30)">17185</text><text transform="translate(894.6 919.6) rotate(-30)">17185</text><text transform="translate(992.5 -12.8) rotate(-30)">17185</text><text transform="translate(992.5 61.6) rotate(-30)">17185</text><text transform="translate(992.5 136.0) rotate(-30)">17185</text><text transform="translate(992.5 210.4) rotate(-30)">17185</text><text transform="translate(992.5 284.8) rotate(-30)">17185</text><text transform="translate(992.5 359.2) rotate(-30)">17185</text><text transform="translate(992.5 433.6) rotate(-30)">17185</text><text transform="translate(992.5 508.0) rotate(-30)">17185</text><text transform="translate(992.5 582.4) rotate(-30)">17185</text><text transform="translate(992.5 656.8) rotate(-30)">17185</text><text transform="translate(992.5 731.2) rotate(-30)">17185</text><text transform="translate(992.5 805.6) rotate(-30)">17185</text><text transform="translate(992.5 880.0) rotate(-30)">17185</text><text transform="translate(1090.4 22.0) rotate(-30)">17185</text><text transform="translate(1090.4 96.4) rotate(-30)">17185</text><text transform="translate(1090.4 170.8) rotate(-30)">17185</text><text transform="translate(1090.4 245.2) rotate(-30)">17185</text><text transform="translate(1090.4 319.6) rotate(-30)">17185</text><text transform="translate(1090.4 394.0) rotate(-30)">17185</text><text transform="translate(1090.4 468.4) rotate(-30)">17185</text><text transform="translate(1090.4 542.8) rotate(-30)">17185</text><text transform="translate(1090.4 617.2) rotate(-30)">17185</text><text transform="translate(1090.4 691.6) rotate(-30)">17185</text><text transform="translate(1090.4 766.0) rotate(-30)">17185</text><text transform="translate(1090.4 840.4) rotate(-30)">17185</text><text transform="translate(1090.4 914.8) rotate(-30)">17185</text><text transform="translate(1188.3 -17.6) rotate(-30)">17185</text><text transform="translate(1188.3 56.8) rotate(-30)">17185</text><text transform="translate(1188.3 131.2) rotate(-30)">17185</text><text transform="translate(1188.3 205.6) rotate(-30)">17185</text><text transform="translate(1188.3 280.0) rotate(-30)">17185</text><text transform="translate(1188.3 354.4) rotate(-30)">17185</text><text transform="translate(1188.3 428.8) rotate(-30)">17185</text><text transform="translate(1188.3 503.2) rotate(-30)">17185</text><text transform="translate(1188.3 577.6) rotate(-30)">17185</text><text transform="translate(1188.3 652.0) rotate(-30)">17185</text><text transform="translate(1188.3 726.4) rotate(-30)">17185</text><text transform="translate(1188.3 800.8) rotate(-30)">17185</text><text transform="translate(1188.3 875.2) rotate(-30)">17185</text><text transform="translate(1286.2 17.2) rotate(-30)">17185</text><text transform="translate(1286.2 91.6) rotate(-30)">17185</text><text transform="translate(1286.2 166.0) rotate(-30)">17185</text><text transform="translate(1286.2 240.4) rotate(-30)">17185</text><text transform="translate(1286.2 314.8) rotate(-30)">17185</text><text transform="translate(1286.2 389.2) rotate(-30)">17185</text><text transform="translate(1286.2 463.6) rotate(-30)">17185</text><text transform="translate(1286.2 538.0) rotate(-30)">17185</text><text transform="translate(1286.2 612.4) rotate(-30)">17185</text><text transform="translate(1286.2 686.8) rotate(-30)">17185</text><text transform="translate(1286.2 761.2) rotate(-30)">17185</text><text transform="translate(1286.2 835.6) rotate(-30)">17185</text><text transform="translate(1286.2 910.0) rotate(-30)">17185</text><text transform="translate(1384.1 -22.4) rotate(-30)">17185</text><text transform="translate(1384.1 52.0) rotate(-30)">17185</text><text transform="translate(1384.1 126.4) rotate(-30)">17185</text><text transform="translate(1384.1 200.8) rotate(-30)">17185</text><text transform="translate(1384.1 275.2) rotate(-30)">17185</text><text transform="translate(1384.1 349.6) rotate(-30)">17185</text><text transform="translate(1384.1 424.0) rotate(-30)">17185</text><text transform="translate(1384.1 498.4) rotate(-30)">17185</text><text transform="translate(1384.1 572.8) rotate(-30)">17185</text><text transform="translate(1384.1 647.2) rotate(-30)">17185</text><text transform="translate(1384.1 721.6) rotate(-30)">17185</text><text transform="translate(1384.1 796.0) rotate(-30)">17185</text><text transform="translate(1384.1 870.4) rotate(-30)">17185</text><text transform="translate(1482.0 12.4) rotate(-30)">17185</text><text transform="translate(1482.0 86.8) rotate(-30)">17185</text><text transform="translate(1482.0 161.2) rotate(-30)">17185</text><text transform="translate(1482.0 235.6) rotate(-30)">17185</text><text transform="translate(1482.0 310.0) rotate(-30)">17185</text><text transform="translate(1482.0 384.4) rotate(-30)">17185</text><text transform="translate(1482.0 458.8) rotate(-30)">17185</text><text transform="translate(1482.0 533.2) rotate(-30)">17185</text><text transform="translate(1482.0 607.6) rotate(-30)">17185</text><text transform="translate(1482.0 682.0) rotate(-30)">17185</text><text transform="translate(1482.0 756.4) rotate(-30)">17185</text><text transform="translate(1482.0 830.8) rotate(-30)">17185</text><text transform="translate(1482.0 905.2) rotate(-30)">17185</text><text transform="translate(1579.9 -27.2) rotate(-30)">17185</text><text transform="translate(1579.9 47.2) rotate(-30)">17185</text><text transform="translate(1579.9 121.6) rotate(-30)">17185</text><text transform="translate(1579.9 196.0) rotate(-30)">17185</text><text transform="translate(1579.9 270.4) rotate(-30)">17185</text><text transform="translate(1579.9 344.8) rotate(-30)">17185</text><text transform="translate(1579.9 419.2) rotate(-30)">17185</text><text transform="translate(1579.9 493.6) rotate(-30)">17185</text><text transform="translate(1579.9 568.0) rotate(-30)">17185</text><text transform="translate(1579.9 642.4) rotate(-30)">17185</text><text transform="translate(1579.9 716.8) rotate(-30)">17185</text><text transform="translate(1579.9 791.2) rotate(-30)">17185</text><text transform="translate(1579.9 865.6) rotate(-30)">17185</text><text transform="translate(1677.8 7.6) rotate(-30)">17185</text><text transform="translate(1677.8 82.0) rotate(-30)">17185</text><text transform="translate(1677.8 156.4) rotate(-30)">17185</text><text transform="translate(1677.8 230.8) rotate(-30)">17185</text><text transform="translate(1677.8 305.2) rotate(-30)">17185</text><text transform="translate(1677.8 379.6) rotate(-30)">17185</text><text transform="translate(1677.8 454.0) rotate(-30)">17185</text><text transform="translate(1677.8 528.4) rotate(-30)">17185</text><text transform="translate(1677.8 602.8) rotate(-30)">17185</text><text transform="translate(1677.8 677.2) rotate(-30)">17185</text><text transform="translate(1677.8 751.6) rotate(-30)">17185</text><text transform="translate(1677.8 826.0) rotate(-30)">17185</text><text transform="translate(1677.8 900.4) rotate(-30)">17185</text><text transform="translate(1775.7 -32.0) rotate(-30)">17185</text><text transform="translate(1775.7 42.4) rotate(-30)">17185</text><text transform="translate(1775.7 116.8) rotate(-30)">17185</text><text transform="translate(1775.7 191.2) rotate(-30)">17185</text><text transform="translate(1775.7 265.6) rotate(-30)">17185</text><text transform="translate(1775.7 340.0) rotate(-30)">17185</text><text transform="translate(1775.7 414.4) rotate(-30)">17185</text><text transform="translate(1775.7 488.8) rotate(-30)">17185</text><text transform="translate(1775.7 563.2) rotate(-30)">17185</text><text transform="translate(1775.7 637.6) rotate(-30)">17185</text><text transform="translate(1775.7 712.0) rotate(-30)">17185</text><text transform="translate(1775.7 786.4) rotate(-30)">17185</text><text transform="translate(1775.7 860.8) rotate(-30)">17185</text><text transform="translate(1873.6 2.8) rotate(-30)">17185</text><text transform="translate(1873.6 77.2) rotate(-30)">17185</text><text transform="translate(1873.6 151.6) rotate(-30)">17185</text><text transform="translate(1873.6 226.0) rotate(-30)">17185</text><text transform="translate(1873.6 300.4) rotate(-30)">17185</text><text transform="translate(1873.6 374.8) rotate(-30)">17185</text><text transform="translate(1873.6 449.2) rotate(-30)">17185</text><text transform="translate(1873.6 523.6) rotate(-30)">17185</text><text transform="translate(1873.6 598.0) rotate(-30)">17185</text><text transform="translate(1873.6 672.4) rotate(-30)">17185</text><text transform="translate(1873.6 746.8) rotate(-30)">17185</text><text transform="translate(1873.6 821.2) rotate(-30)">17185</text><text transform="translate(1873.6 895.6) rotate(-30)">17185</text><text transform="translate(1971.5 -36.8) rotate(-30)">17185</text><text transform="translate(1971.5 37.6) rotate(-30)">17185</text><text transform="translate(1971.5 112.0) rotate(-30)">17185</text><text transform="translate(1971.5 186.4) rotate(-30)">17185</text><text transform="translate(1971.5 260.8) rotate(-30)">17185</text><text transform="translate(1971.5 335.2) rotate(-30)">17185</text><text transform="translate(1971.5 409.6) rotate(-30)">17185</text><text transform="translate(1971.5 484.0) rotate(-30)">17185</text><text transform="translate(1971.5 558.4) rotate(-30)">17185</text><text transform="translate(1971.5 632.8) rotate(-30)">17185</text><text transform="translate(1971.5 707.2) rotate(-30)">17185</text><text transform="translate(1971.5 781.6) rotate(-30)">17185</text><text transform="translate(1971.5 856.0) rotate(-30)">17185</text></g></svg>
<!-- SCROLLBAR -->
<div class="a" style="left:1906px;top:88px;width:14px;height:790px;background:#f1f1f1"></div>
<div class="a" style="left:1907px;top:90px;width:12px;height:204px;background:#c1c1c1;border-radius:6px"></div>
</body></html>
